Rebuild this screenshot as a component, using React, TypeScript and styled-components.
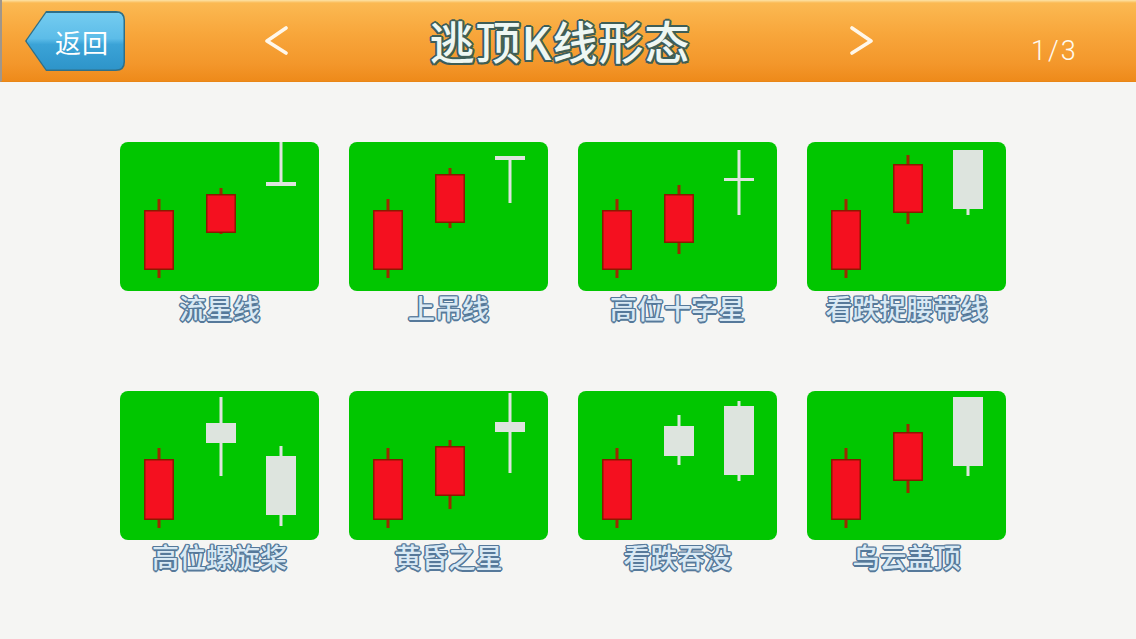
import styled, { createGlobalStyle } from "styled-components"

type Candle = {
    x: number
    top: number
    bottom: number
    high: number
    low: number
    kind: "red" | "white"
}

type Pattern = {
    name: string
    candles: Candle[]
}

const red = (x: number, top: number, bottom: number, high: number, low: number): Candle => ({ x, top, bottom, high, low, kind: "red" })
const white = (x: number, top: number, bottom: number, high: number, low: number): Candle => ({ x, top, bottom, high, low, kind: "white" })

const base = red(24, 68, 128, 57, 136)

const patterns: Pattern[] = [
    { name: "流星线", candles: [base, red(86, 52, 91, 46, 92), white(146, 40, 44, 0, 44)] },
    { name: "上吊线", candles: [base, red(86, 32, 81, 26, 86), white(146, 14, 18, 14, 61)] },
    { name: "高位十字星", candles: [base, red(86, 52, 101, 43, 112), white(146, 36, 39, 8, 73)] },
    { name: "看跌捉腰带线", candles: [base, red(86, 22, 71, 13, 82), white(146, 8, 67, 8, 73)] },
    { name: "高位螺旋桨", candles: [red(24, 68, 129, 57, 137), white(86, 32, 52, 6, 85), white(146, 65, 124, 55, 135)] },
    { name: "黄昏之星", candles: [red(24, 68, 129, 57, 137), red(86, 55, 105, 49, 118), white(146, 31, 41, 2, 82)] },
    { name: "看跌吞没", candles: [red(24, 68, 129, 57, 137), white(86, 35, 65, 24, 74), white(146, 15, 84, 10, 90)] },
    { name: "乌云盖顶", candles: [red(24, 68, 129, 57, 137), red(86, 41, 90, 33, 102), white(146, 6, 75, 6, 85)] },
]

const BODY_W = 30

const CandleMark = ({ c }: { c: Candle }) => {
    const cx = c.x + BODY_W / 2
    const isRed = c.kind === "red"
    return (
        <g>
            <line x1={cx} y1={c.high} x2={cx} y2={c.low} stroke={isRed ? "#9c2a00" : "#dde4de"} strokeWidth={3} />
            <rect
                x={c.x + (isRed ? 0.75 : 0)}
                y={c.top + (isRed ? 0.75 : 0)}
                width={BODY_W - (isRed ? 1.5 : 0)}
                height={c.bottom - c.top - (isRed ? 1.5 : 0)}
                fill={isRed ? "#f4101f" : "#dde4de"}
                stroke={isRed ? "#8a1a00" : "none"}
                strokeWidth={1.5}
            />
        </g>
    )
}

export default function App() {
    return (
        <>
            <GlobalStyle />
            <Page>
                <Header>
                    <BackButton>
                        <BackFace>返回</BackFace>
                    </BackButton>
                    <span />
                    <Chevron viewBox="0 0 25 30">
                        <polyline points="22,2 3,15 22,27" />
                    </Chevron>
                    <Title>逃顶K线形态</Title>
                    <Chevron viewBox="0 0 25 30">
                        <polyline points="3,2 22,15 3,27" />
                    </Chevron>
                    <span />
                    <PageCount>1/3</PageCount>
                </Header>
                <Grid>
                    {patterns.map((p) => (
                        <Cell key={p.name}>
                            <Card>
                                <svg width="199" height="149" viewBox="0 0 199 149">
                                    {p.candles.map((c, i) => (
                                        <CandleMark key={i} c={c} />
                                    ))}
                                </svg>
                            </Card>
                            <Label>{p.name}</Label>
                        </Cell>
                    ))}
                </Grid>
            </Page>
        </>
    )
}

const GlobalStyle = createGlobalStyle`
    html, body {
        margin: 0;
        padding: 0;
        background: #f5f5f3;
    }
    body {
        font-family: "Noto Sans CJK SC", "Noto Sans", sans-serif;
    }
`

const Page = styled.div`
    width: 1136px;
    height: 639px;
    overflow: hidden;
    background: #f5f5f3;
`

const Header = styled.header`
    box-sizing: border-box;
    height: 82px;
    padding-left: 23px;
    display: grid;
    grid-template-columns: 100px 139px 25px 560px 25px 157px 48px;
    align-items: center;
    background: linear-gradient(#fde3a6 0px, #fbb952 3px, #f8a73c 40%, #f3962a 80%, #ee8a1a 100%);
    border-left: 2px solid #a0968a;
    border-bottom: 1px solid #e98616;
`

const BackButton = styled.button`
    width: 100px;
    height: 60px;
    padding: 1.5px;
    border: none;
    background: #2f6f88;
    clip-path: path("M21,0 H91 Q100,0 100,9 V51 Q100,60 91,60 H21 L0,30 Z");
    cursor: pointer;
    margin-top: 1px;
`

const BackFace = styled.div`
    box-sizing: border-box;
    height: 100%;
    padding-left: 14px;
    display: flex;
    align-items: center;
    justify-content: center;
    font-family: "Noto Sans CJK SC", sans-serif;
    font-size: 26px;
    color: #ffffff;
    letter-spacing: 1px;
    background: linear-gradient(#74ccf0 0%, #5cbce8 45%, #3ba3d7 55%, #2e94c9 100%);
    clip-path: path("M20,0 H89 Q97,0 97,8 V49 Q97,57 89,57 H20 L0,28.5 Z");
`

const Chevron = styled.svg`
    width: 25px;
    height: 30px;
    margin-top: 1px;
    fill: none;
    stroke: #fff7ea;
    stroke-width: 3.6;
    stroke-linecap: round;
    stroke-linejoin: round;
`

const Title = styled.h1`
    margin: 0 0 0 -4px;
    padding-right: 14px;
    text-align: center;
    font-family: "Noto Sans CJK SC", sans-serif;
    font-size: 45px;
    font-weight: 500;
    color: #eef7f3;
    letter-spacing: 1px;
    text-shadow:
        2px 0 0 #3f5e57, -2px 0 0 #3f5e57, 0 2px 0 #3f5e57, 0 -2px 0 #3f5e57,
        1.5px 1.5px 0 #3f5e57, -1.5px 1.5px 0 #3f5e57, 1.5px -1.5px 0 #3f5e57, -1.5px -1.5px 0 #3f5e57;
`

const PageCount = styled.div`
    margin-top: 20px;
    font-family: Roboto, "Liberation Sans", sans-serif;
    font-size: 27px;
    font-weight: 300;
    color: #fffaf0;
    letter-spacing: 2px;
`

const Grid = styled.main`
    padding: 60px 0 0 120px;
    display: grid;
    grid-template-columns: repeat(4, 199px);
    column-gap: 30px;
    row-gap: 64px;
`

const Cell = styled.div`
    display: flex;
    flex-direction: column;
    align-items: center;
`

const Card = styled.div`
    width: 199px;
    height: 149px;
    border-radius: 8px;
    background: #01c600;
    overflow: hidden;

    svg {
        display: block;
    }
`

const Label = styled.div`
    height: 36px;
    line-height: 34px;
    font-family: "Noto Sans CJK SC", sans-serif;
    font-size: 27px;
    font-weight: 500;
    color: #d9e9f4;
    white-space: nowrap;
    text-shadow:
        1.5px 0 0 #56799a, -1.5px 0 0 #56799a, 0 1.5px 0 #56799a, 0 -1.5px 0 #56799a,
        1px 1px 0 #56799a, -1px 1px 0 #56799a, 1px -1px 0 #56799a, -1px -1px 0 #56799a;
`
